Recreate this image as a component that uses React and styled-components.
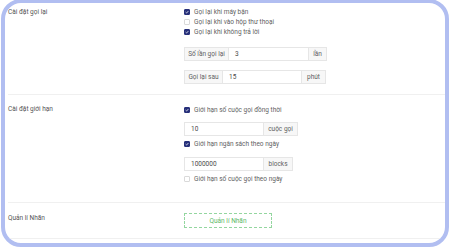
import React from "react";
import styled, { createGlobalStyle } from "styled-components";

const Global = createGlobalStyle`
  html, body {
    margin: 0;
    padding: 0;
    background: #ffffff;
    overflow: hidden;
  }
  body {
    font-family: Roboto, "Liberation Sans", sans-serif;
  }
`;

const Frame = styled.div`
  box-sizing: border-box;
  width: 448px;
  height: 248px;
  margin: -1px 0 0 1px;
  border: 4px solid #b1bef1;
  border-radius: 20px;
  background: #ffffff;
  padding-left: 3px;
  overflow: hidden;
`;

const Section = styled.div`
  display: grid;
  grid-template-columns: 176px 1fr;
  align-items: start;
  padding-top: ${(p) => p.top}px;
  padding-bottom: ${(p) => p.bottom}px;
  border-bottom: 1px solid #f0f0f0;
`;

const Label = styled.div`
  font-size: 6.5px;
  line-height: 10px;
  color: #555555;
  margin-top: ${(p) => p.offset || 0}px;
`;

const Column = styled.div`
  display: flex;
  flex-direction: column;
  align-items: flex-start;
`;

const CheckRow = styled.div`
  display: flex;
  align-items: center;
  gap: 4px;
  height: 10px;
  margin-top: ${(p) => p.mt || 0}px;
  font-size: 6.5px;
  color: #5f5f5f;
`;

const Box = styled.span`
  box-sizing: border-box;
  width: 6px;
  height: 6px;
  border-radius: 1px;
  display: inline-flex;
  align-items: center;
  justify-content: center;
  background: ${(p) => (p.checked ? "#27307a" : "#ffffff")};
  border: 1px solid ${(p) => (p.checked ? "#27307a" : "#d9d9d9")};
`;

const Group = styled.div`
  display: flex;
  height: 14px;
  margin-top: ${(p) => p.mt || 0}px;
  font-size: 6.5px;
  color: #5f5f5f;
`;

const Addon = styled.div`
  box-sizing: border-box;
  width: ${(p) => p.w}px;
  display: flex;
  align-items: center;
  justify-content: center;
  background: #f7f7f7;
  border: 1px solid #e6e6e6;
  ${(p) => (p.left ? "border-right: none;" : "border-left: none;")}
`;

const Field = styled.div`
  box-sizing: border-box;
  width: ${(p) => p.w}px;
  display: flex;
  align-items: center;
  padding-left: 6px;
  background: #ffffff;
  border: 1px solid #e6e6e6;
  color: #4a4a4a;
`;

const TagButton = styled.div`
  box-sizing: border-box;
  width: 88px;
  height: 15px;
  display: flex;
  align-items: center;
  justify-content: center;
  border: 1px dashed #93d69f;
  font-size: 6.5px;
  color: #5cb868;
`;

const Check = ({ checked, children, mt }) => (
  <CheckRow mt={mt}>
    <Box checked={checked}>
      {checked && (
        <svg width="4" height="4" viewBox="0 0 10 10">
          <path d="M1.5 5.2 L4 7.6 L8.6 2.4" fill="none" stroke="#fff" strokeWidth="1.8" />
        </svg>
      )}
    </Box>
    {children}
  </CheckRow>
);

export default function App() {
  return (
    <>
      <Global />
      <Frame>
        <Section top={4} bottom={10}>
          <Label>Cài đặt gọi lại</Label>
          <Column>
            <Check checked>Gọi lại khi máy bận</Check>
            <Check>Gọi lại khi vào hộp thư thoại</Check>
            <Check checked>Gọi lại khi không trả lời</Check>
            <Group mt={10}>
              <Addon left w={44}>Số lần gọi lại</Addon>
              <Field w={81}>3</Field>
              <Addon w={18}>lần</Addon>
            </Group>
            <Group mt={9}>
              <Addon left w={38}>Gọi lại sau</Addon>
              <Field w={80}>15</Field>
              <Addon w={24}>phút</Addon>
            </Group>
          </Column>
        </Section>
        <Section top={10} bottom={18}>
          <Label offset={-1}>Cài đặt giới hạn</Label>
          <Column>
            <Check checked>Giới hạn số cuộc gọi đồng thời</Check>
            <Group mt={7}>
              <Field w={80}>10</Field>
              <Addon w={34}>cuộc gọi</Addon>
            </Group>
            <Check checked mt={3}>Giới hạn ngân sách theo ngày</Check>
            <Group mt={8}>
              <Field w={80}>1000000</Field>
              <Addon w={29}>blocks</Addon>
            </Group>
            <Check mt={3}>Giới hạn số cuộc gọi theo ngày</Check>
          </Column>
        </Section>
        <Section top={10} bottom={10}>
          <Label offset={0}>Quản lí Nhãn</Label>
          <Column>
            <TagButton>Quản lí Nhãn</TagButton>
          </Column>
        </Section>
      </Frame>
    </>
  );
}
